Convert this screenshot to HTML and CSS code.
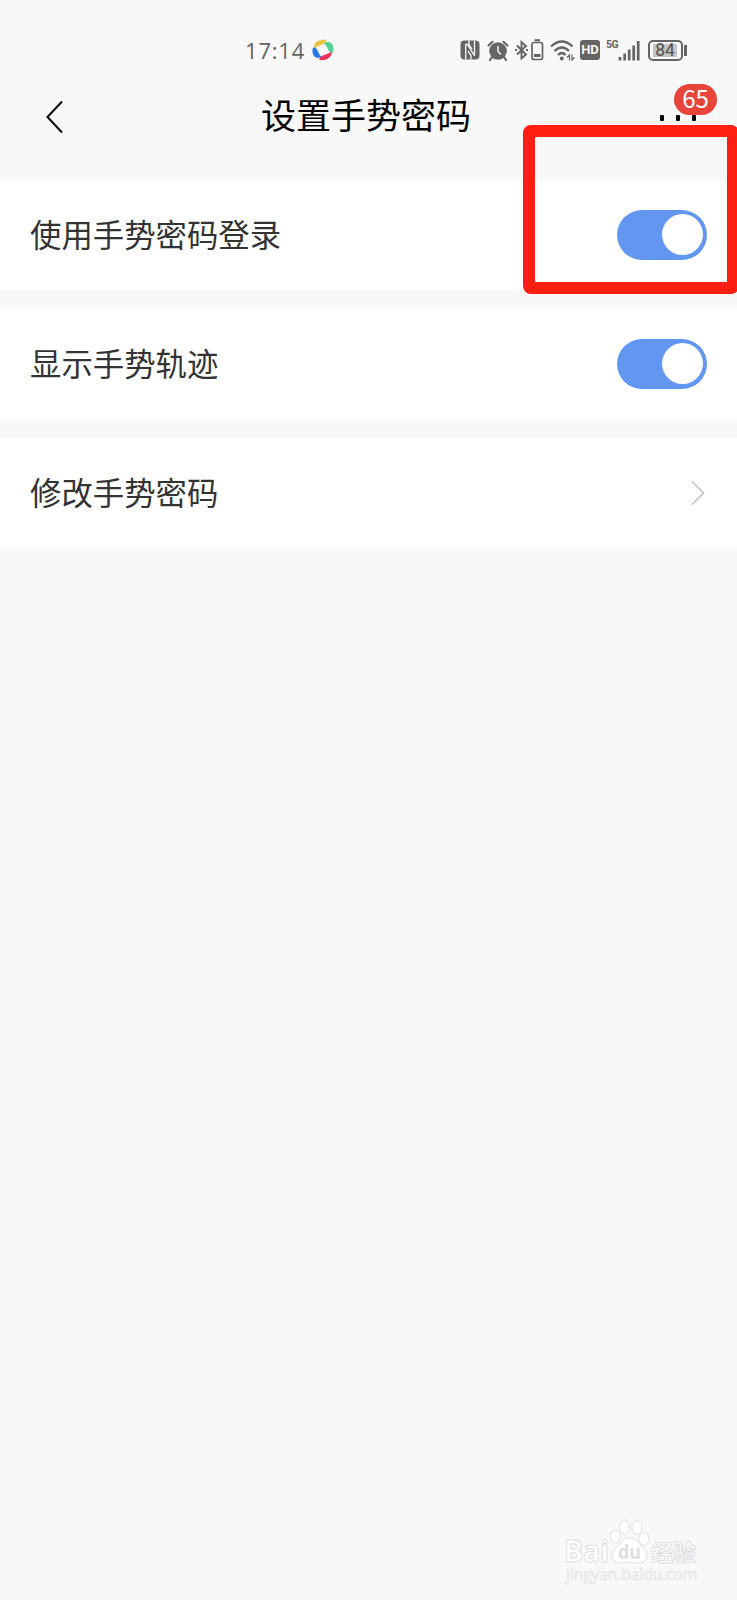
FILE: index.html
```html
<!DOCTYPE html>
<html lang="zh-CN">
<head>
    <title>设置手势密码</title>
    <meta charset="UTF-8">
    <meta name="viewport" content="width=device-width, initial-scale=1.0">
    <link rel="stylesheet" href="styles.css">
</head>
<body>
    <div class="status-bar">
        <span class="clock">17:14</span>
        <svg class="app-icon" width="22" height="22" viewBox="0 0 22 22">
            <path d="M2.500 9.500C1 4 6 0 14 1c1 4-5 4-11.500 8.500z" fill="#eec542"/>
            <path d="M12 4.500c6-4 11 1 9 9-5 1-4-5-9-9z" fill="#52d394"/>
            <path d="M19.500 12.500c1 5-4 9.500-12 8.500-1-5 6-4 12-8.500z" fill="#e73556"/>
            <path d="M9.500 17.500c-5 4-11-1-8.500-9 5-1 4 5 8.500 9z" fill="#2979ec"/>
        </svg>
        <div class="status-icons">
            <svg class="nfc" width="20" height="20" viewBox="0 0 20 20">
                <rect x="0.5" y="0.5" width="19" height="19" rx="4" fill="#646464"/>
                <path d="M5.700 19.500V4.500h1.800l6.500 10.500h.5V.5M9 .5v4l3 4.500M11 19.500v-4l-3-4.500" fill="none" stroke="#f8f8f8" stroke-width="1.300"/>
            </svg>
            <svg class="alarm" width="22" height="21" viewBox="0 0 22 21">
                <circle cx="11" cy="11" r="8.800" fill="#646464"/>
                <path d="M1.500 5.500L5.500 1.800M20.500 5.500L16.500 1.800M5 17l-2 3M17 17l2 3" stroke="#646464" stroke-width="2.200" stroke-linecap="round"/>
                <path d="M11 6v5.500l3 3" fill="none" stroke="#f8f8f8" stroke-width="1.500"/>
            </svg>
            <svg class="bluetooth" width="29" height="22" viewBox="0 0 29 22">
                <path d="M2 6.500l9 9-4.500 4V3L11 7l-9 8.500" fill="none" stroke="#646464" stroke-width="1.900"/>
                <path d="M0 11h2M11 11h2" stroke="#646464" stroke-width="2"/>
                <rect x="17" y="3.500" width="10.500" height="17" rx="2" fill="none" stroke="#646464" stroke-width="1.700"/>
                <path d="M19.500 1.200h5.500" stroke="#646464" stroke-width="2"/>
                <path d="M19 16.500h6.500" stroke="#646464" stroke-width="3"/>
            </svg>
            <svg class="wifi" width="25" height="21" viewBox="0 0 25 21">
                <path d="M1 6.500Q12 -3.500 22.500 6.500M4.500 11Q12 4 19 11M8 15Q12 11 15.500 15" fill="none" stroke="#646464" stroke-width="2.300"/>
                <circle cx="11.800" cy="18.500" r="1.900" fill="#646464"/>
                <path d="M17 17.500l2.500-2.500v5.500M24.500 17.500l-2.500 2.500v-5.500" fill="none" stroke="#646464" stroke-width="1.200"/>
            </svg>
            <span class="hd">HD</span>
            <span class="network">5G</span>
            <svg class="signal" width="22" height="21" viewBox="0 0 22 21">
                <path d="M2 17v3.500M6.700 13.500v7M11.200 9.500v11M15.700 5.500v15M20.200 1v19.500" stroke="#646464" stroke-width="2.700"/>
            </svg>
            <span class="battery"><span class="battery-level">84</span></span>
            <span class="battery-tip"></span>
        </div>
    </div>

    <div class="nav-bar">
        <svg class="back" width="18" height="34" viewBox="0 0 18 34">
            <path d="M16 1.500L1.500 17 16 32.500" fill="none" stroke="#111" stroke-width="2.100"/>
        </svg>
        <h1>设置手势密码</h1>
        <div class="more">
            <i></i><i></i><i></i>
            <span class="badge">65</span>
        </div>
    </div>

    <div class="settings">
        <div class="row">
            <span class="label">使用手势密码登录</span>
            <span class="switch"></span>
        </div>
        <div class="row">
            <span class="label">显示手势轨迹</span>
            <span class="switch"></span>
        </div>
        <div class="row">
            <span class="label">修改手势密码</span>
            <svg class="arrow" width="16" height="26" viewBox="0 0 16 26">
                <path d="M2 1.500L13.500 13 2 24.500" fill="none" stroke="#c3c3c3" stroke-width="1.700"/>
            </svg>
        </div>
    </div>

    <div class="highlight"></div>

    <svg class="watermark" width="142" height="72" viewBox="0 0 142 72">
        <g fill="#fff" stroke="#dfdfdf" stroke-width="1">
            <text class="wm-logo" x="4" y="44" textLength="45" lengthAdjust="spacingAndGlyphs">Bai</text>
            <ellipse cx="55.500" cy="18.500" rx="5" ry="6.500"/>
            <ellipse cx="64.500" cy="9" rx="5" ry="7"/>
            <ellipse cx="77" cy="9.500" rx="5" ry="7"/>
            <ellipse cx="84" cy="21" rx="5" ry="6.500"/>
            <path d="M69 20c-8 0-8 6-13 10-7 6-4 15 4 15 4 0 6-1 9-1s5 1 10 1c8 0 11-9 4-15-5-4-6-10-14-10z"/>
            <text class="wm-cn" x="91" y="43" textLength="45" lengthAdjust="spacingAndGlyphs">经验</text>
        </g>
        <text class="wm-du" x="58" y="41" textLength="23" lengthAdjust="spacingAndGlyphs">du</text>
        <text class="wm-url" x="6" y="62" textLength="131" lengthAdjust="spacingAndGlyphs">jingyan.baidu.com</text>
    </svg>
</body>
</html>
```

FILE: styles.css
```css
body {
    margin: 0;
    position: relative;
    height: 1600px;
    overflow: hidden;
    background-color: #f8f8f8;
    font-family: "Noto Sans CJK SC", sans-serif;
    color: #333;
}
.status-bar {
    display: flex;
    align-items: center;
    height: 80px;
    padding: 20px 50px 0 245px;
    box-sizing: border-box;
    color: #646464;
}
.clock {
    width: 66px;
    font: 22px/22px "Open Sans", sans-serif;
    letter-spacing: 0.8px;
    white-space: nowrap;
}
.app-icon {
    margin-left: 1px;
}
.status-icons {
    display: flex;
    align-items: center;
    margin-left: auto;
}
.alarm {
    margin-left: 7px;
}
.bluetooth {
    margin-left: 6px;
}
.wifi {
    margin-left: 6px;
}
.hd {
    width: 20px;
    margin-left: 5px;
    border-radius: 3px;
    background-color: #646464;
    color: #f8f8f8;
    font: bold 13px/20px Roboto, sans-serif;
    text-align: center;
}
.network {
    width: 12px;
    height: 20px;
    margin-left: 6px;
    font: bold 10.5px/9px Roboto, sans-serif;
    letter-spacing: -0.5px;
}
.battery {
    width: 35px;
    height: 21px;
    margin-left: 8px;
    padding: 2px;
    box-sizing: border-box;
    border: 2px solid #646464;
    border-radius: 5px;
}
.battery-level {
    display: block;
    width: 24px;
    margin-left: 1px;
    background-color: #c4c4c4;
    color: #505050;
    font: 17.5px/13px Roboto, sans-serif;
    text-align: center;
}
.battery-tip {
    width: 3px;
    height: 11px;
    margin-left: 1px;
    background-color: #646464;
}
.nav-bar {
    display: flex;
    align-items: center;
    height: 73px;
    margin-bottom: 27px;
    padding: 0 41px 0 46px;
}
h1 {
    flex: 1;
    margin: 0;
    padding: 0 0 6px 8px;
    font-size: 35px;
    font-weight: 400;
    line-height: 50px;
    text-align: center;
    color: #000;
}
.more {
    position: relative;
    display: flex;
    justify-content: space-between;
    width: 36px;
    padding-top: 3px;
}
.more i {
    width: 4px;
    height: 6px;
    border-radius: 1px;
    background-color: #000;
}
.badge {
    position: absolute;
    left: 14px;
    top: -28px;
    width: 43px;
    height: 31px;
    border-radius: 16px;
    background-color: #e7443c;
    color: #fff;
    font: 24px/27px "Noto Sans CJK SC", sans-serif;
    text-align: center;
}
.settings {
    display: flex;
    flex-direction: column;
    gap: 19.6px;
}
.row {
    display: flex;
    align-items: center;
    justify-content: space-between;
    height: 109.6px;
    padding: 0 30px;
    background-color: #fff;
    font-size: 31.4px;
}
.label {
    padding-bottom: 3px;
}
.switch {
    width: 90px;
    height: 50px;
    padding: 4.5px 4px;
    box-sizing: border-box;
    border-radius: 25px;
    background-color: #6396f1;
}
.switch::after {
    content: "";
    display: block;
    width: 41px;
    height: 41px;
    margin-left: auto;
    border-radius: 50%;
    background-color: #fff;
}
.arrow {
    margin-right: 1px;
}
/* red frame over the first switch */
.highlight {
    position: absolute;
    left: 523px;
    top: 125px;
    width: 216px;
    height: 169px;
    box-sizing: border-box;
    border: 12.5px solid #ff1e12;
    border-radius: 8px;
}
.watermark {
    position: absolute;
    left: 560px;
    top: 1518px;
}
.wm-logo {
    font: bold 31px "Open Sans", sans-serif;
}
.wm-cn {
    font: bold 23px "Noto Sans CJK SC", sans-serif;
}
.wm-du {
    font: bold 20px "Open Sans", sans-serif;
    fill: #dedede;
}
.wm-url {
    font: 16px "Open Sans", sans-serif;
    fill: #fff;
    stroke: #e3e3e3;
    stroke-width: 0.7px;
}
```
